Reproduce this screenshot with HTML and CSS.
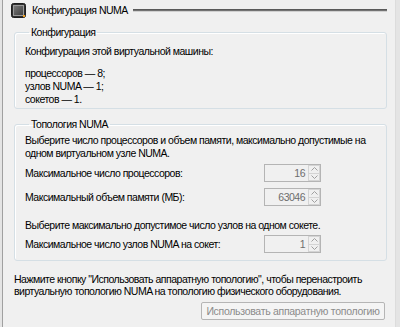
FILE: index.html
```html
<!DOCTYPE html>
<html lang="ru">
<head>
<meta charset="utf-8">
<title>Конфигурация NUMA</title>
<link rel="stylesheet" href="styles.css">
</head>
<body>
<div class="window">
  <div class="header">
    <svg class="icon" width="15" height="15" viewBox="0 0 15 15">
      <defs>
        <linearGradient id="g" x1="0" y1="0" x2="1" y2="1">
          <stop offset="0" stop-color="#7a7a7a"/>
          <stop offset="1" stop-color="#3c3c3c"/>
        </linearGradient>
      </defs>
      <rect x="0.5" y="0.5" width="14" height="14" rx="2" fill="#2e2e2e" stroke="#1e1e1e"/>
      <rect x="2.5" y="2.5" width="10" height="10" fill="url(#g)" stroke="#9a9a9a"/>
      <rect x="12" y="12" width="2" height="2" fill="#f0a020"/>
    </svg>
    <span class="header-title">Конфигурация NUMA</span>
    <span class="header-line"></span>
  </div>

  <fieldset class="group group-config">
    <legend>Конфигурация</legend>
    <p class="line">Конфигурация этой виртуальной машины:</p>
    <div class="list">
      <p class="line">процессоров — 8;</p>
      <p class="line">узлов NUMA — 1;</p>
      <p class="line">сокетов — 1.</p>
    </div>
  </fieldset>

  <fieldset class="group group-topology">
    <legend>Топология NUMA</legend>
    <p class="line">Выберите число процессоров и объем памяти, максимально допустимые на<br>одном виртуальном узле NUMA.</p>
    <div class="row row-first">
      <span class="row-label">Максимальное число процессоров:</span>
      <div class="spin"><span class="spin-value">16</span><span class="spin-btns"><span class="spin-btn"><svg width="7" height="4" viewBox="0 0 7 4"><path d="M0.5 3.5 L3.5 0.5 L6.5 3.5" fill="none" stroke="#a0a0a0"/></svg></span><span class="spin-btn"><svg width="7" height="4" viewBox="0 0 7 4"><path d="M0.5 0.5 L3.5 3.5 L6.5 0.5" fill="none" stroke="#a0a0a0"/></svg></span></span></div>
    </div>
    <div class="row">
      <span class="row-label">Максимальный объем памяти (МБ):</span>
      <div class="spin"><span class="spin-value">63046</span><span class="spin-btns"><span class="spin-btn"><svg width="7" height="4" viewBox="0 0 7 4"><path d="M0.5 3.5 L3.5 0.5 L6.5 3.5" fill="none" stroke="#a0a0a0"/></svg></span><span class="spin-btn"><svg width="7" height="4" viewBox="0 0 7 4"><path d="M0.5 0.5 L3.5 3.5 L6.5 0.5" fill="none" stroke="#a0a0a0"/></svg></span></span></div>
    </div>
    <p class="line note">Выберите максимально допустимое число узлов на одном сокете.</p>
    <div class="row row-last">
      <span class="row-label">Максимальное число узлов NUMA на сокет:</span>
      <div class="spin"><span class="spin-value">1</span><span class="spin-btns"><span class="spin-btn"><svg width="7" height="4" viewBox="0 0 7 4"><path d="M0.5 3.5 L3.5 0.5 L6.5 3.5" fill="none" stroke="#a0a0a0"/></svg></span><span class="spin-btn"><svg width="7" height="4" viewBox="0 0 7 4"><path d="M0.5 0.5 L3.5 3.5 L6.5 0.5" fill="none" stroke="#a0a0a0"/></svg></span></span></div>
    </div>
  </fieldset>

  <p class="hint">Нажмите кнопку "Использовать аппаратную топологию", чтобы перенастроить<br>виртуальную топологию NUMA на топологию физического оборудования.</p>
  <div class="actions">
    <button class="btn" disabled>Использовать аппаратную топологию</button>
  </div>
</div>
</body>
</html>
```

FILE: styles.css
```css
html {
  background: #e4e4e4;
}
body {
  margin: 0;
  font-family: "Liberation Sans", Arial, sans-serif;
  font-size: 10.5px;
  letter-spacing: -0.5px;
  line-height: 13px;
  color: #000;
}
.window {
  margin-left: 2px;
  width: 394px;
  height: 327px;
  box-sizing: border-box;
  border-left: 1px solid #a0a0a0;
  border-right: 1px solid #dcdcdc;
  background: #f0f0f0;
  overflow: hidden;
}
.header {
  display: flex;
  align-items: center;
  height: 20px;
  padding-left: 8px;
  padding-right: 8px;
}
.icon {
  flex: none;
  display: block;
}
.header-title {
  margin-left: 6px;
  white-space: nowrap;
}
.header-line {
  flex: 1;
  height: 2px;
  margin-left: 5px;
  background: linear-gradient(#4e4e4e, #7e7e7e);
  box-shadow: 0 1px 0 #d0d0d0;
}
.group {
  margin: 0 8px 0 11px;
  padding: 0 0 0 10px;
  border: 1px solid #d5dfe5;
  border-radius: 3px;
  box-shadow: inset 1px 1px 0 #fff;
  min-width: 0;
}
.group legend {
  margin-left: 4px;
  padding: 0 2px;
  line-height: 13px;
}
.group-config {
  margin-top: 6px;
  padding-top: 6px;
  padding-bottom: 2px;
}
.group-topology {
  margin-top: 9px;
  padding-top: 3px;
  padding-bottom: 7px;
}
.line {
  margin: 0;
  white-space: nowrap;
}
.list {
  margin-top: 9px;
}
.row {
  display: flex;
  align-items: center;
  justify-content: space-between;
  height: 18px;
  margin-right: 65px;
  margin-top: 6px;
}
.row-first {
  margin-top: 4px;
}
.row-label {
  white-space: nowrap;
}
.note {
  margin-top: 13px;
}
.row-last {
  margin-top: 3px;
}
.spin {
  display: flex;
  width: 57px;
  height: 18px;
  box-sizing: border-box;
  border: 1px solid #b4b4b4;
  background: #f0f0f0;
}
.spin-value {
  flex: 1;
  text-align: right;
  padding-right: 3px;
  line-height: 16px;
  color: #6d6d6d;
}
.spin-btns {
  display: flex;
  flex-direction: column;
  width: 12px;
}
.spin-btn {
  flex: 1;
  display: flex;
  align-items: center;
  justify-content: center;
  border: 1px solid #d4d4d4;
}
.spin-btn + .spin-btn {
  border-top: none;
}
.spin-btn svg {
  display: block;
}
.hint {
  margin: 12px 0 0 11px;
  line-height: 12px;
  white-space: nowrap;
}
.actions {
  display: flex;
  justify-content: flex-end;
  margin: 5px 10px 0 0;
}
.btn {
  width: 184px;
  height: 18px;
  padding: 0;
  border: 1px solid #b5b5b5;
  border-radius: 2px;
  background: #f4f4f4;
  color: #8b8b8b;
  font-family: "Liberation Sans", Arial, sans-serif;
  font-size: 10.5px;
  letter-spacing: -0.3px;
}
```
